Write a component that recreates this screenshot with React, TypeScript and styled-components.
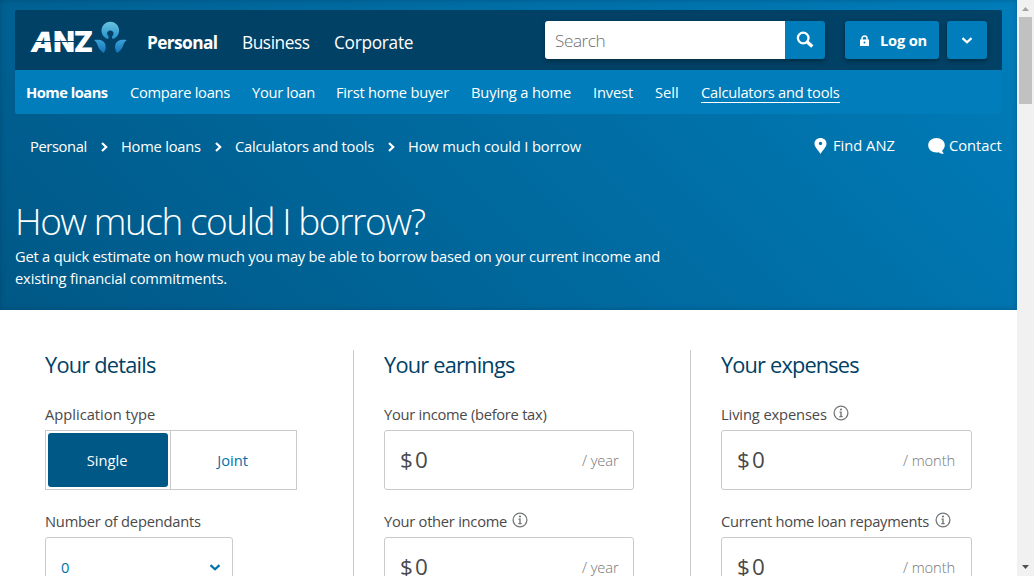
import React from "react";
import styled, { createGlobalStyle } from "styled-components";

const Global = createGlobalStyle`
  * { box-sizing: border-box; }
  body { margin: 0; background: #fff; overflow: hidden; }
  body, button, input { font-family: "Open Sans", "Noto Sans", sans-serif; font-size: 14.7px; }
  button { border: 0; padding: 0; color: inherit; cursor: pointer; }
  h1, h2, p { margin: 0; font-weight: 400; }
`;

const Window = styled.div`
  display: flex;
  height: 576px;
  overflow: hidden;
`;
const Page = styled.div`
  width: 1017px;
  flex: none;
`;

/* A run of text with a known measure and its own tracking */
const Text = styled.span<{ $w: number; $ls?: number; $b?: boolean }>`
  display: block;
  flex: none;
  width: ${(p) => p.$w}px;
  white-space: nowrap;
  letter-spacing: ${(p) => p.$ls ?? 0}px;
  font-weight: ${(p) => (p.$b ? 700 : "inherit")};
`;

const Hero = styled.header`
  height: 310px;
  padding: 10px 15px 0;
  color: #fff;
  font-weight: 450;
  background: linear-gradient(45deg, #005886 0%, #007dba 100%);
  box-shadow: inset 0 0 5px rgba(0, 50, 85, 0.4);
`;
const TopBar = styled.div`
  display: flex;
  align-items: center;
  height: 60px;
  padding: 0 15px 0 16px;
  background: #004165;
  border-radius: 2px 2px 0 0;
`;
const Brand = styled.a`
  display: flex;
  width: 116px;
  height: 60px;
  flex: none;
`;
const WordMark = styled.span`
  position: relative;
  display: flex;
  width: 62px;
  height: 60px;
  padding: 2px 0 0 1px;
  font: 900 28px/60px Inter, sans-serif;
  letter-spacing: -1px;
  &::after {
    content: "";
    position: absolute;
    left: 2px;
    top: 31px;
    width: 43px;
    height: 1px;
    background: #004165;
  }
`;
const Slanted = styled.span`
  transform: skewX(-12deg);
`;
const Lotus = styled.svg`
  margin-top: 11px;
`;
const Primary = styled.nav`
  display: flex;
  gap: 24px;
  padding-top: 5px;
  font-size: 17.3px;
  line-height: 28px;
`;
const Search = styled.div`
  display: flex;
  margin-left: auto;
  height: 38px;
  border-radius: 3px;
  box-shadow: 0 2px 4px rgba(0, 0, 0, 0.35);
`;
const SearchField = styled.div`
  width: 240px;
  padding: 1px 0 0 10px;
  background: #fff;
  color: #6f6f6f;
  border-radius: 3px 0 0 3px;
  font-size: 17.2px;
  font-weight: 300;
  line-height: 38px;
`;
const Button = styled.button<{ $w: number; $ml?: number; $flat?: boolean }>`
  display: flex;
  align-items: center;
  justify-content: center;
  gap: 11px;
  width: ${(p) => p.$w}px;
  height: 38px;
  margin-left: ${(p) => p.$ml ?? 0}px;
  background: #007dba;
  border-radius: ${(p) => (p.$flat ? "0 3px 3px 0" : "3px")};
  box-shadow: ${(p) => (p.$flat ? "none" : "0 2px 4px rgba(0, 0, 0, 0.35)")};
  svg { flex: none; }
`;
const LogOn = styled(Button)`
  padding-left: 3px;
`;
const Secondary = styled.nav`
  display: flex;
  gap: 22px;
  height: 44px;
  padding: 10px 0 0 11px;
  line-height: 24px;
  background: #007dba;
  border-radius: 0 0 2px 2px;
`;
const Underlined = styled.div`
  height: 23px;
  border-bottom: 1px solid #fff;
`;
const Utility = styled.div`
  display: flex;
  height: 66px;
  padding: 20px 0 0 15px;
  line-height: 24px;
`;
const Crumbs = styled.div`
  display: flex;
  svg { margin: 8px 13px 0 14px; flex: none; }
`;
const Links = styled.div`
  display: flex;
  margin: -1px 0 0 auto;
`;
const IconLink = styled.a<{ $gap: number }>`
  display: flex;
  svg { flex: none; margin-right: ${(p) => p.$gap}px; }
  & + & { margin-left: 32px; }
`;
const Title = styled.h1`
  height: 66px;
  padding-top: 21px;
  font-size: 37px;
  line-height: 40px;
  && { font-weight: 300; }
`;
const Intro = styled.div`
  line-height: 22px;
  margin-top: -1px;
`;

const Form = styled.main`
  display: flex;
  padding: 40px 15px 0;
  height: 266px;
  color: #494949;
`;
const Column = styled.section<{ $w: number }>`
  width: ${(p) => p.$w}px;
  padding-left: 30px;
  & + & { border-left: 1px solid #c9cacb; }
`;
const Heading = styled.h2`
  height: 53px;
  padding-top: 1px;
  font-size: 21.8px;
  line-height: 28px;
  color: #004165;
`;
const Field = styled.div`
  height: 107px;
`;
const Label = styled.div`
  display: flex;
  height: 27px;
  line-height: 22px;
  svg { margin: 2px 0 0 6px; }
`;
const Toggle = styled.div`
  display: flex;
  width: 252px;
  height: 60px;
  border: 1px solid #c9cacb;
`;
const Option = styled.div<{ $on?: boolean }>`
  display: flex;
  align-items: center;
  justify-content: center;
  width: ${(p) => (p.$on ? 120 : 127)}px;
  margin: ${(p) => (p.$on ? "2px" : "0")};
  border-left: ${(p) => (p.$on ? "0" : "1px solid #c9cacb")};
  border-radius: ${(p) => (p.$on ? 3 : 0)}px;
  background: ${(p) => (p.$on ? "#005886" : "#fff")};
  color: ${(p) => (p.$on ? "#fff" : "#0072ac")};
`;
const Box = styled.div<{ $w: number }>`
  display: flex;
  align-items: center;
  justify-content: space-between;
  width: ${(p) => p.$w}px;
  height: 60px;
  padding: 0 14px 0 15px;
  border: 1px solid #c9cacb;
  border-radius: 3px;
`;
const Amount = styled.div`
  display: flex;
  padding-bottom: 1px;
  font-size: 22.4px;
  line-height: 28px;
`;
const Unit = styled.div`
  font-weight: 300;
  color: #747678;
`;
const Select = styled(Box)`
  color: #0072ac;
  padding: 0 11px 0 15px;
`;

const Scrollbar = styled.div`
  display: flex;
  flex-direction: column;
  align-items: center;
  width: 17px;
  background: #f1f1f1;
`;
const Thumb = styled.div`
  width: 13px;
  height: 87px;
  margin-bottom: auto;
  background: #c1c1c1;
`;

const Chevron = ({ color = "#fff" }: { color?: string }) => (
  <svg width="12" height="8" viewBox="0 0 12 8" fill="none" stroke={color} strokeWidth="2.2">
    <path d="M1.5 2.1 6 6.2 10.5 2.1" />
  </svg>
);
const CrumbArrow = () => (
  <svg width="7" height="10" viewBox="0 0 7 10" fill="none" stroke="#fff" strokeWidth="2.2">
    <path d="M1 1 5.2 5 1 9" />
  </svg>
);
const Info = () => (
  <svg width="16" height="16" viewBox="0 0 16 16" fill="none" stroke="#747678">
    <circle cx="8" cy="8" r="6.9" strokeWidth="1.3" />
    <path d="M8 6.500v5.500M6.500 7.100H8M6.300 11.600h3.400" strokeWidth="1.4" />
    <circle cx="8" cy="4.500" r="1.1" fill="#747678" stroke="none" />
  </svg>
);

const Money = ({ unit, unitW, w }: { unit: string; unitW: number; w: number }) => (
  <Box $w={w}>
    <Amount>
      <Text $w={15}>$</Text>
      <Text $w={14}>0</Text>
    </Amount>
    <Unit>
      <Text $w={unitW} $ls={-0.08}>{unit}</Text>
    </Unit>
  </Box>
);

export default function App() {
  return (
    <Window>
      <Global />
      <Page>
        <Hero>
          <TopBar>
            <Brand>
              <WordMark><Slanted>A</Slanted><span>NZ</span></WordMark>
              <Lotus width="36" height="34" viewBox="0 0 36 34">
                <defs>
                  <linearGradient id="petal" x1="0" y1="0" x2="0" y2="1">
                    <stop offset="0" stopColor="#6cc3e0" />
                    <stop offset="1" stopColor="#2391cc" />
                  </linearGradient>
                  <linearGradient id="leaf" x1="0" y1="0" x2="0" y2="1">
                    <stop offset="0" stopColor="#3da2d8" />
                    <stop offset="1" stopColor="#1273b8" />
                  </linearGradient>
                </defs>
                <path fill="url(#petal)" d="M15.3 18.1A8.8 8.8 0 1 1 19.3 18.1L19 15.3A3.2 3.2 0 1 0 15.6 15.3Z" />
                <path fill="url(#leaf)" d="M1 19C6 18 12.5 19 12.7 25.5C12.8 28.5 12 30.5 10.6 32C8 30 5.600 28 4.600 24.500C4 22 3 20.500 1 19Z" />
                <path fill="url(#leaf)" d="M33.800 19C28.800 18 22.300 19 22.100 25.500C22 28.500 22.800 30.500 24.200 32C26.800 30 29.200 28 30.200 24.500C30.800 22 31.800 20.500 33.800 19Z" />
              </Lotus>
            </Brand>
            <Primary>
              <Text $w={71} $b $ls={-0.6}>Personal</Text>
              <Text $w={68} $ls={-0.45}>Business</Text>
              <Text $w={80} $ls={-0.3}>Corporate</Text>
            </Primary>
            <Search>
              <SearchField><Text $w={52} $ls={-0.45}>Search</Text></SearchField>
              <Button $w={40} $flat aria-label="Search">
                <svg width="18" height="18" viewBox="0 0 18 18" fill="none" stroke="#fff">
                  <circle cx="7.200" cy="7" r="5.300" strokeWidth="2.300" />
                  <path d="M11.200 11 16.300 15.600" strokeWidth="3.400" />
                </svg>
              </Button>
            </Search>
            <LogOn $w={94} $ml={20}>
              <svg width="9" height="11" viewBox="0 0 9 11">
                <path d="M2 5V3.500a2.500 2.500 0 0 1 5 0V5" fill="none" stroke="#fff" strokeWidth="1.500" />
                <path d="M0 4.500h9V11H0z" fill="#fff" />
                <circle cx="4.500" cy="7.500" r="1" fill="#007dba" />
              </svg>
              <Text $w={47} $b $ls={-0.2}>Log on</Text>
            </LogOn>
            <Button $w={40} $ml={8} aria-label="More log on options"><Chevron /></Button>
          </TopBar>
          <Secondary>
            <Text $w={82} $b $ls={-0.5}>Home loans</Text>
            <Text $w={100} $ls={-0.28}>Compare loans</Text>
            <Text $w={62} $ls={-0.3}>Your loan</Text>
            <Text $w={113} $ls={-0.22}>First home buyer</Text>
            <Text $w={100} $ls={-0.15}>Buying a home</Text>
            <Text $w={40} $ls={-0.15}>Invest</Text>
            <Text $w={24}>Sell</Text>
            <Underlined><Text $w={139} $ls={-0.24}>Calculators and tools</Text></Underlined>
          </Secondary>
          <Utility>
            <Crumbs>
              <Text $w={57} $ls={-0.38}>Personal</Text>
              <CrumbArrow />
              <Text $w={80} $ls={-0.23}>Home loans</Text>
              <CrumbArrow />
              <Text $w={139} $ls={-0.21}>Calculators and tools</Text>
              <CrumbArrow />
              <Text $w={173} $ls={-0.16}>How much could I borrow</Text>
            </Crumbs>
            <Links>
              <IconLink $gap={6}>
                <svg width="13" height="24" viewBox="0 0 13 24">
                  <path fillRule="evenodd" fill="#fff" d="M6.500 5C10 5 12.500 7.400 12.500 10.600C12.500 14 9.500 16.500 6.500 21C3.500 16.500.500 14 .500 10.600C.500 7.400 3 5 6.500 5ZM6.500 8.700a1.700 1.700 0 1 0 0 3.400a1.700 1.700 0 1 0 0-3.400Z" />
                </svg>
                <Text $w={63}>Find ANZ</Text>
              </IconLink>
              <IconLink $gap={4}>
                <svg width="17" height="24" viewBox="0 0 17 24">
                  <path fill="#fff" d="M8.500 5C13 5 16.800 8 16.800 12C16.800 14.500 15.600 16.500 14 17.700L15.800 20.800C13.500 20.800 12 20.300 10.800 19.300C4.500 20.300.200 16.800.200 12.200C.200 8 4 5 8.500 5Z" />
                </svg>
                <Text $w={53}>Contact</Text>
              </IconLink>
            </Links>
          </Utility>
          <Title><Text $w={412} $ls={-1.47}>How much could I borrow?</Text></Title>
          <Intro>
            <Text $w={650} $ls={-0.22}>Get a quick estimate on how much you may be able to borrow based on your current income and</Text>
            <Text $w={650} $ls={-0.15}>existing financial commitments.</Text>
          </Intro>
        </Hero>
        <Form>
          <Column $w={338}>
            <Heading><Text $w={200} $ls={-0.8}>Your details</Text></Heading>
            <Field>
              <Label><Text $w={112}>Application type</Text></Label>
              <Toggle>
                <Option $on><Text $w={42}>Single</Text></Option>
                <Option><Text $w={32}>Joint</Text></Option>
              </Toggle>
            </Field>
            <Field>
              <Label><Text $w={160} $ls={-0.22}>Number of dependants</Text></Label>
              <Select $w={188}><Text $w={9}>0</Text><Chevron color="#0072ac" /></Select>
            </Field>
          </Column>
          <Column $w={337}>
            <Heading><Text $w={200} $ls={-0.8}>Your earnings</Text></Heading>
            <Field>
              <Label><Text $w={163} $ls={-0.27}>Your income (before tax)</Text></Label>
              <Money w={250} unit="/ year" unitW={37} />
            </Field>
            <Field>
              <Label><Text $w={122} $ls={-0.26}>Your other income</Text><Info /></Label>
              <Money w={250} unit="/ year" unitW={37} />
            </Field>
          </Column>
          <Column $w={312}>
            <Heading><Text $w={200} $ls={-0.85}>Your expenses</Text></Heading>
            <Field>
              <Label><Text $w={106} $ls={-0.12}>Living expenses</Text><Info /></Label>
              <Money w={251} unit="/ month" unitW={54} />
            </Field>
            <Field>
              <Label><Text $w={208} $ls={-0.27}>Current home loan repayments</Text><Info /></Label>
              <Money w={251} unit="/ month" unitW={54} />
            </Field>
          </Column>
        </Form>
      </Page>
      <Scrollbar>
        <svg width="17" height="17" viewBox="0 0 17 17"><path d="M5 11h7L8.500 7z" fill="#a3a3a3" /></svg>
        <Thumb />
        <svg width="17" height="17" viewBox="0 0 17 17"><path d="M5 6h7L8.500 10z" fill="#505050" /></svg>
      </Scrollbar>
    </Window>
  );
}
